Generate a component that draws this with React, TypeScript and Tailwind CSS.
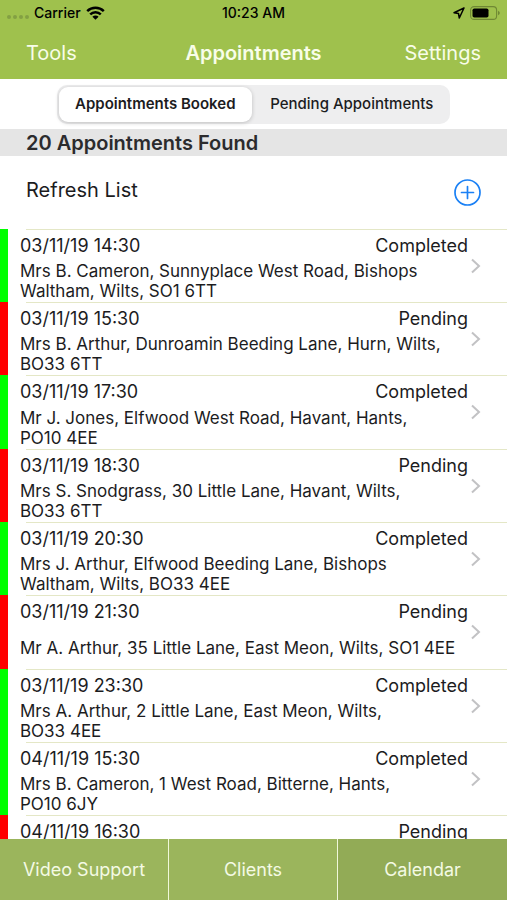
import { useState } from "react";

type Appointment = {
  time: string;
  status: "Completed" | "Pending";
  details: string;
};

const appointments: Appointment[] = [
  { time: "03/11/19 14:30", status: "Completed", details: "Mrs B. Cameron, Sunnyplace West Road, Bishops\nWaltham, Wilts, SO1 6TT" },
  { time: "03/11/19 15:30", status: "Pending", details: "Mrs B. Arthur, Dunroamin Beeding Lane, Hurn, Wilts,\nBO33 6TT" },
  { time: "03/11/19 17:30", status: "Completed", details: "Mr J. Jones, Elfwood West Road, Havant, Hants,\nPO10 4EE" },
  { time: "03/11/19 18:30", status: "Pending", details: "Mrs S. Snodgrass, 30 Little Lane, Havant, Wilts,\nBO33 6TT" },
  { time: "03/11/19 20:30", status: "Completed", details: "Mrs J. Arthur, Elfwood Beeding Lane, Bishops\nWaltham, Wilts, BO33 4EE" },
  { time: "03/11/19 21:30", status: "Pending", details: "Mr A. Arthur, 35 Little Lane, East Meon, Wilts, SO1 4EE" },
  { time: "03/11/19 23:30", status: "Completed", details: "Mrs A. Arthur, 2 Little Lane, East Meon, Wilts,\nBO33 4EE" },
  { time: "04/11/19 15:30", status: "Completed", details: "Mrs B. Cameron, 1 West Road, Bitterne, Hants,\nPO10 6JY" },
  { time: "04/11/19 16:30", status: "Pending", details: "" },
];

function StatusBar() {
  return (
    <div className="grid h-[26px] grid-cols-3 items-center px-[7px] text-sm font-medium text-black">
      <div className="flex items-center gap-[5px]">
        <span className="flex gap-[2px] pt-2" aria-hidden="true">
          {[0, 1, 2, 3].map((dot) => (
            <span key={dot} className="size-[4px] rounded-full bg-[#83a043]" />
          ))}
        </span>
        <span>Carrier</span>
        <svg className="h-[14px] w-[19px]" viewBox="0 0 19 14" aria-hidden="true">
          <g fill="none" stroke="black" strokeWidth="2.5">
            <path d="M1.2 5.1a12 12 0 0 1 16.6 0" />
            <path d="M4.2 8.3a7.6 7.6 0 0 1 10.6 0" />
          </g>
          <path d="M9.5 13.8 6.4 10.7a4.4 4.4 0 0 1 6.2 0Z" />
        </svg>
      </div>
      <div className="text-center">10:23 AM</div>
      <div className="flex items-center justify-end gap-[5px]">
        <svg className="size-[12px]" viewBox="0 0 12 12" aria-hidden="true">
          <path d="M11 1 1 5.7l4.5.8L6.3 11Z" fill="none" stroke="black" strokeWidth="1.5" strokeLinejoin="round" />
        </svg>
        <svg className="h-[14px] w-[30px]" viewBox="0 0 30 14" aria-hidden="true">
          <rect x=".6" y=".6" width="26" height="12.8" rx="3.5" fill="none" stroke="#6f8834" strokeWidth="1.1" />
          <rect x="2.5" y="2.5" width="16" height="9" rx="1.8" />
          <path d="M28 4.7q1.8.7 1.8 2.3T28 9.3Z" fill="#6f8834" />
        </svg>
      </div>
    </div>
  );
}

function AppointmentRow({ time, status, details }: Appointment) {
  return (
    <li className="flex min-h-[73px] nth-[3n]:min-h-[74px]">
      <span className={status === "Completed" ? "w-2 shrink-0 bg-[#00ff00]" : "w-2 shrink-0 bg-[#ff0000]"} />
      <button type="button" className="relative flex flex-1 items-center gap-[2px] pr-[26px] pl-3 text-left">
        <span className="absolute top-0 right-0 left-[18px] h-px bg-[#e4e7c6]" />
        <span className="flex flex-1 flex-col self-stretch">
          <span className="flex h-[31px] items-center justify-between pt-[2px] text-lg">
            <span>{time}</span>
            <span>{status}</span>
          </span>
          <span className="flex min-h-10 flex-1 items-center text-[17px] leading-5 whitespace-pre-line">{details}</span>
        </span>
        <svg className="h-[16px] w-[11px] shrink-0" viewBox="0 0 11 16" aria-hidden="true">
          <path d="m2 1.5 7 6.5-7 6.5" fill="none" stroke="#c2c2c4" strokeWidth="2" />
        </svg>
      </button>
    </li>
  );
}

export default function App() {
  const [tab, setTab] = useState("booked");
  const active = "flex-1 rounded-[9px] bg-white font-semibold shadow-[0_1px_4px_rgba(0,0,0,0.2)]";
  const inactive = "flex-1 rounded-[9px] font-medium";

  return (
    <div className="flex h-screen flex-col overflow-hidden bg-white font-[Inter,'Liberation_Sans',sans-serif] text-[#1c1c1e]">
      <header className="shrink-0 bg-[#9fc14d]">
        <StatusBar />
        <nav className="grid h-[53px] grid-cols-[1fr_auto_1fr] items-center px-[26px] text-xl text-[#f8fde9]">
          <button type="button" className="justify-self-start">Tools</button>
          <h1 className="font-semibold">Appointments</h1>
          <button type="button" className="justify-self-end">Settings</button>
        </nav>
      </header>

      <div className="flex h-[50px] shrink-0 items-center justify-center px-[57px]">
        <div className="flex h-[39px] flex-1 gap-1 rounded-[10px] bg-[#eeeeef] p-[2px] text-[15px]">
          <button type="button" aria-pressed={tab === "booked"} onClick={() => setTab("booked")} className={tab === "booked" ? active : inactive}>
            Appointments Booked
          </button>
          <button type="button" aria-pressed={tab === "pending"} onClick={() => setTab("pending")} className={tab === "pending" ? active : inactive}>
            Pending Appointments
          </button>
        </div>
      </div>

      <h2 className="flex h-[27px] shrink-0 items-center bg-[#e5e5e5] px-[26px] pt-px text-xl font-semibold text-[#2b2b2d]">
        20 Appointments Found
      </h2>

      <main className="min-h-0 flex-1 overflow-hidden">
        <div className="flex h-[73px] items-center justify-between px-[26px]">
          <button type="button" className="pb-1.5 text-xl">Refresh List</button>
          <button type="button" aria-label="Add appointment">
            <svg className="size-[27px]" viewBox="0 0 27 27" aria-hidden="true">
              <g fill="none" stroke="#1a80f5" strokeWidth="1.7" strokeLinecap="round">
                <circle cx="13.5" cy="13.5" r="12.5" />
                <path d="M7.5 13.5h12M13.5 7.5v12" />
              </g>
            </svg>
          </button>
        </div>
        <ul>
          {appointments.map((item) => (
            <AppointmentRow key={item.time} {...item} />
          ))}
        </ul>
      </main>

      <footer className="grid h-[61px] shrink-0 grid-cols-3 divide-x divide-[#f0f8da] bg-[#9bb55c] text-lg text-[#f4fae4]">
        <button type="button">Video Support</button>
        <button type="button">Clients</button>
        <button type="button" className="bg-[#92ab56]">Calendar</button>
      </footer>
    </div>
  );
}
